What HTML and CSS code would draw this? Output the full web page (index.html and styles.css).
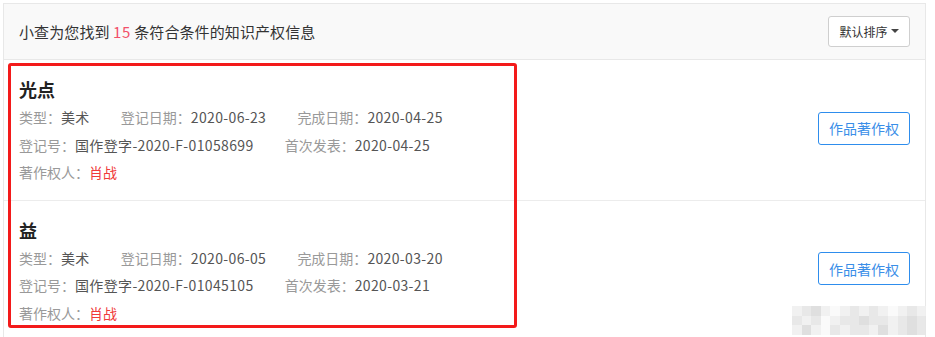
FILE: index.html
```html
<!DOCTYPE html>
<html lang="zh-CN">
<head>
<meta charset="utf-8">
<title>知识产权信息</title>
<link rel="stylesheet" href="styles.css">
</head>
<body>
<div class="panel">
  <div class="panel-head">
    <div class="summary">小查为您找到 <span class="count">15</span> 条符合条件的知识产权信息</div>
    <button class="sort-btn">默认排序 <span class="caret"></span></button>
  </div>
  <div class="item">
    <div class="item-body">
      <div class="item-title">光点</div>
      <div class="item-row">
        <span class="field"><span class="label">类型：</span><span class="value">美术</span></span>
        <span class="field"><span class="label">登记日期：</span><span class="value">2020-06-23</span></span>
        <span class="field"><span class="label">完成日期：</span><span class="value">2020-04-25</span></span>
      </div>
      <div class="item-row">
        <span class="field"><span class="label">登记号：</span><span class="value">国作登字-2020-F-01058699</span></span>
        <span class="field"><span class="label">首次发表：</span><span class="value">2020-04-25</span></span>
      </div>
      <div class="item-row">
        <span class="field"><span class="label">著作权人：</span><span class="owner">肖战</span></span>
      </div>
    </div>
    <button class="tag-btn">作品著作权</button>
  </div>
  <div class="item">
    <div class="item-body">
      <div class="item-title">益</div>
      <div class="item-row">
        <span class="field"><span class="label">类型：</span><span class="value">美术</span></span>
        <span class="field"><span class="label">登记日期：</span><span class="value">2020-06-05</span></span>
        <span class="field"><span class="label">完成日期：</span><span class="value">2020-03-20</span></span>
      </div>
      <div class="item-row">
        <span class="field"><span class="label">登记号：</span><span class="value">国作登字-2020-F-01045105</span></span>
        <span class="field"><span class="label">首次发表：</span><span class="value">2020-03-21</span></span>
      </div>
      <div class="item-row">
        <span class="field"><span class="label">著作权人：</span><span class="owner">肖战</span></span>
      </div>
    </div>
    <button class="tag-btn">作品著作权</button>
  </div>
</div>
<div class="highlight"></div>
<div class="mosaic">
  <i class="m1"></i><i class="m2"></i><i class="m3"></i><i class="m1"></i><i class="m0"></i><i class="m1"></i><i class="m2"></i><i class="m1"></i><i class="m2"></i><i class="m1"></i><i class="m0"></i><i class="m1"></i><i class="m2"></i><i class="m1"></i>
  <i class="m2"></i><i class="m1"></i><i class="m2"></i><i class="m0"></i><i class="m1"></i><i class="m2"></i><i class="m2"></i><i class="m3"></i><i class="m2"></i><i class="m2"></i><i class="m1"></i><i class="m2"></i><i class="m3"></i><i class="m2"></i>
  <i class="m1"></i><i class="m3"></i><i class="m1"></i><i class="m0"></i><i class="m2"></i><i class="m1"></i><i class="m2"></i><i class="m2"></i><i class="m1"></i><i class="m3"></i><i class="m1"></i><i class="m2"></i><i class="m3"></i><i class="m2"></i>
</div>
</body>
</html>
```

FILE: styles.css
```css
* { box-sizing: border-box; }

body {
  margin: 0;
  background: #ffffff;
  font-family: "Noto Sans CJK SC", "Noto Sans", sans-serif;
  color: #333;
  position: relative;
  height: 337px;
  overflow: hidden;
}

.panel {
  margin: 3px 9px 0 3px;
  border: 1px solid #e8e8e8;
  background: #fff;
}

.panel-head {
  height: 56px;
  background: #f9f9f9;
  border-bottom: 1px solid #e8e8e8;
  display: flex;
  align-items: center;
  justify-content: space-between;
  padding: 0 15px 0 15px;
}

.summary {
  font-size: 15px;
  color: #333;
  letter-spacing: 0.1px;
}

.count { color: #f2506a; letter-spacing: 0.5px; }

.sort-btn {
  width: 82px;
  height: 31px;
  margin-top: -1px;
  border: 1px solid #cfcfcf;
  border-radius: 3px;
  background: #fff;
  font-family: inherit;
  font-size: 12px;
  color: #333;
  display: flex;
  align-items: center;
  justify-content: center;
  gap: 3px;
  padding: 0;
}

.caret {
  width: 0;
  height: 0;
  border-left: 4px solid transparent;
  border-right: 4px solid transparent;
  border-top: 4px solid #444;
}

.item {
  display: flex;
  align-items: center;
  justify-content: space-between;
  padding: 14px 15px 13px 15px;
  border-bottom: 1px solid #ececec;
}

.item-title {
  font-size: 18px;
  font-weight: bold;
  color: #222;
  line-height: 30px;
}

.item-row {
  font-size: 14px;
  line-height: 27.5px;
  white-space: nowrap;
}

.field { margin-right: 28px; }

.label { color: #999; }
.value { color: #555; letter-spacing: 0.35px; }
.owner { color: #f03a3a; }

.tag-btn {
  width: 92px;
  height: 33px;
  margin-top: -4px;
  border: 1px solid #2e8ded;
  border-radius: 3px;
  background: #fff;
  color: #3a8ee8;
  font-family: inherit;
  font-size: 14px;
  padding: 0;
}

.highlight {
  position: absolute;
  left: 8px;
  top: 63px;
  width: 509px;
  height: 265px;
  border: 3px solid #f31a1a;
  border-radius: 3px;
  pointer-events: none;
}

.mosaic {
  position: absolute;
  left: 792px;
  top: 306px;
  display: grid;
  grid-template-columns: repeat(14, 9.6px);
  grid-auto-rows: 9.5px;
  opacity: 0.9;
}

.mosaic i { display: block; }
.m0 { background: #fafafa; }
.m1 { background: #f0f0f0; }
.m2 { background: #e6e6e6; }
.m3 { background: #dcdcdc; }
```
